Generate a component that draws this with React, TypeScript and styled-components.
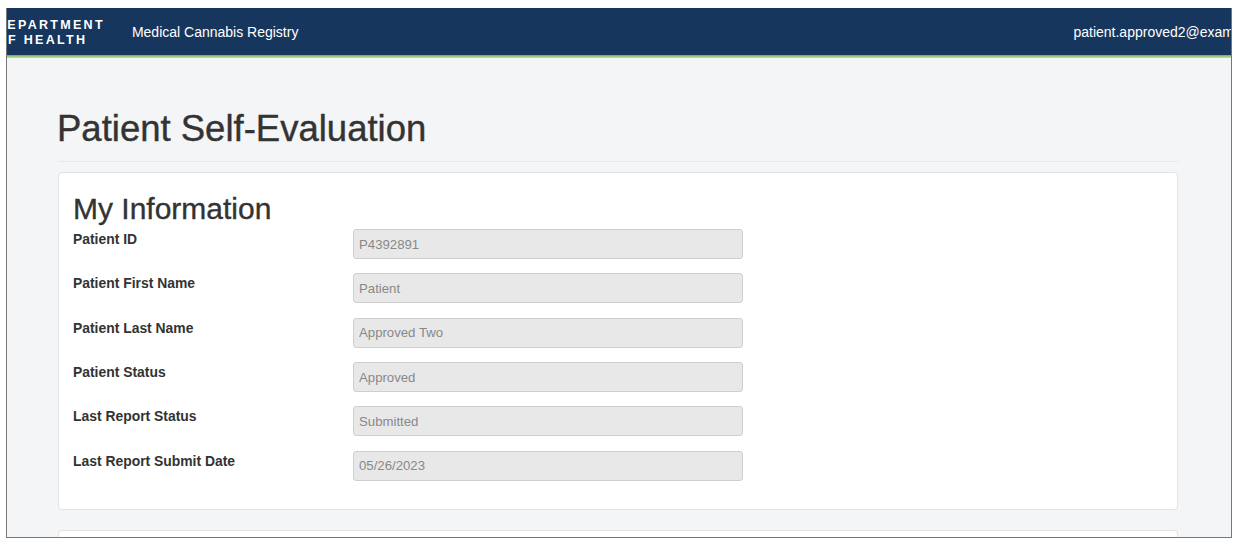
import React from 'react';
import styled, { createGlobalStyle } from 'styled-components';

const GlobalStyle = createGlobalStyle`
  html, body {
    margin: 0;
    padding: 0;
    background: #ffffff;
  }
  body {
    font-family: "Liberation Sans", Arial, Helvetica, sans-serif;
  }
  * {
    box-sizing: border-box;
  }
`;

const Frame = styled.div`
  margin: 8px 0 0 6px;
  width: 1226px;
  height: 530px;
  border: 1px solid #777777;
  border-top: none;
  background: #f4f5f7;
  overflow: hidden;
  display: flex;
  flex-direction: column;
`;

const TopBar = styled.header`
  height: 47px;
  flex-shrink: 0;
  background: #17365d;
  color: #ffffff;
  display: flex;
  align-items: center;
  white-space: nowrap;
`;

const Accent = styled.div`
  height: 3px;
  flex-shrink: 0;
  background: linear-gradient(#74a94c, #c6e2ae);
`;

const Logo = styled.div`
  margin-left: -11px;
  margin-top: 2px;
  display: flex;
  flex-direction: column;
  font-size: 12.5px;
  font-weight: 700;
  letter-spacing: 2.3px;
  line-height: 15px;
`;

const AppName = styled.div`
  margin-left: 27px;
  font-size: 14px;
`;

const UserEmail = styled.div`
  margin-left: auto;
  margin-right: -52px;
  font-size: 14px;
`;

const Main = styled.main`
  padding: 0 0 0 51px;
`;

const Content = styled.div`
  width: 1120px;
`;

const PageHeader = styled.div`
  margin-top: 51px;
  padding-bottom: 12px;
  border-bottom: 1px solid #e8e9eb;
  margin-bottom: 10px;
`;

const Title = styled.h1`
  margin: 0 0 0 -1px;
  font-size: 36.5px;
  font-weight: 400;
  line-height: 1.1;
  color: #333333;
  -webkit-text-stroke: 0.4px #333333;
`;

const Card = styled.section<{ $tall?: boolean }>`
  background: #ffffff;
  border: 1px solid #e2e3e5;
  border-radius: 4px;
  padding: 19px 14px 14px;
  margin-bottom: 20px;
  min-height: ${p => (p.$tall ? '200px' : 'auto')};
`;

const CardTitle = styled.h2`
  margin: 0 0 4px;
  font-size: 30px;
  font-weight: 400;
  line-height: 1.1;
  color: #333333;
  -webkit-text-stroke: 0.35px #333333;
`;

const Row = styled.div`
  display: grid;
  grid-template-columns: 280px 390px;
  align-items: start;
  margin-bottom: 14.3px;
`;

const Label = styled.label`
  font-size: 13.9px;
  font-weight: 700;
  line-height: 20px;
  color: #333333;
`;

const Field = styled.input`
  width: 390px;
  height: 30px;
  padding: 0 5px;
  border: 1px solid #cfcfcf;
  border-radius: 3px;
  background: #e8e8e8;
  color: #888888;
  font-family: "Liberation Sans", Arial, Helvetica, sans-serif;
  font-size: 13.2px;
  outline: none;
`;

const info = [
  { label: 'Patient ID', value: 'P4392891' },
  { label: 'Patient First Name', value: 'Patient' },
  { label: 'Patient Last Name', value: 'Approved Two' },
  { label: 'Patient Status', value: 'Approved' },
  { label: 'Last Report Status', value: 'Submitted' },
  { label: 'Last Report Submit Date', value: '05/26/2023' },
];

export default function App() {
  return (
    <>
      <GlobalStyle />
      <Frame>
        <TopBar>
          <Logo>
            <span>DEPARTMENT</span>
            <span>OF HEALTH</span>
          </Logo>
          <AppName>Medical Cannabis Registry</AppName>
          <UserEmail>patient.approved2@example.com</UserEmail>
        </TopBar>
        <Accent />
        <Main>
          <Content>
            <PageHeader>
              <Title>Patient Self-Evaluation</Title>
            </PageHeader>
            <Card>
              <CardTitle>My Information</CardTitle>
              {info.map(item => (
                <Row key={item.label}>
                  <Label>{item.label}</Label>
                  <Field value={item.value} readOnly disabled />
                </Row>
              ))}
            </Card>
            <Card $tall />
          </Content>
        </Main>
      </Frame>
    </>
  );
}
